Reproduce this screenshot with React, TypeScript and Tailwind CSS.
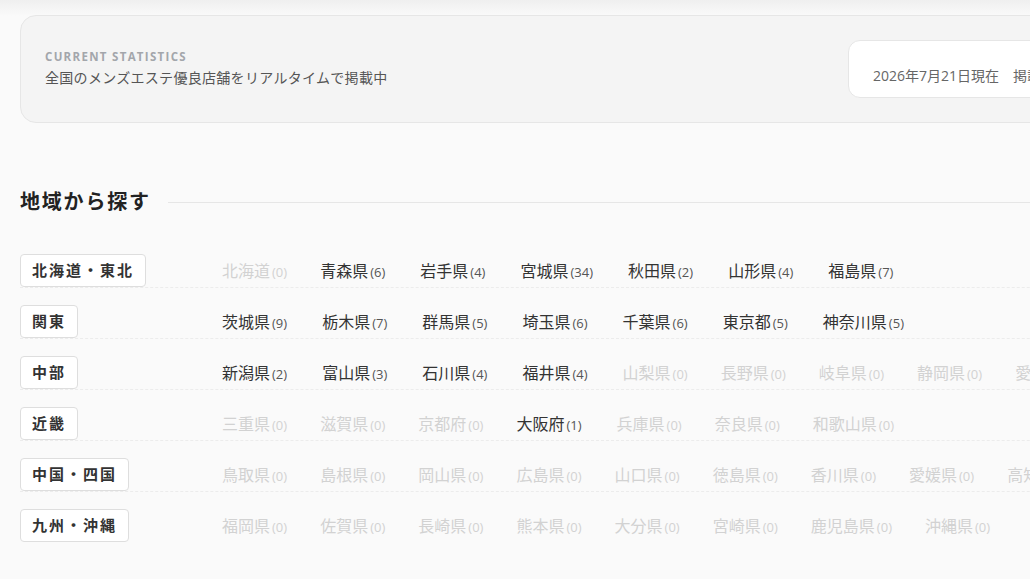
import React from "react";

type Pref = [string, number];
const regions: { name: string; prefs: Pref[] }[] = [
  { name: "北海道・東北", prefs: [["北海道", 0], ["青森県", 6], ["岩手県", 4], ["宮城県", 34], ["秋田県", 2], ["山形県", 4], ["福島県", 7]] },
  { name: "関東", prefs: [["茨城県", 9], ["栃木県", 7], ["群馬県", 5], ["埼玉県", 6], ["千葉県", 6], ["東京都", 5], ["神奈川県", 5]] },
  { name: "中部", prefs: [["新潟県", 2], ["富山県", 3], ["石川県", 4], ["福井県", 4], ["山梨県", 0], ["長野県", 0], ["岐阜県", 0], ["静岡県", 0], ["愛知県", 0]] },
  { name: "近畿", prefs: [["三重県", 0], ["滋賀県", 0], ["京都府", 0], ["大阪府", 1], ["兵庫県", 0], ["奈良県", 0], ["和歌山県", 0]] },
  { name: "中国・四国", prefs: [["鳥取県", 0], ["島根県", 0], ["岡山県", 0], ["広島県", 0], ["山口県", 0], ["徳島県", 0], ["香川県", 0], ["愛媛県", 0], ["高知県", 0]] },
  { name: "九州・沖縄", prefs: [["福岡県", 0], ["佐賀県", 0], ["長崎県", 0], ["熊本県", 0], ["大分県", 0], ["宮崎県", 0], ["鹿児島県", 0], ["沖縄県", 0]] },
];

export default function App() {
  return (
    <div
      className="w-[1030px] h-[579px] overflow-hidden bg-[#fafafa]"
      style={{ fontFamily: '"Open Sans", "Noto Sans CJK JP", sans-serif' }}
    >
      <div className="w-[1200px] bg-gradient-to-b from-[#efefef] to-[#fafafa] bg-no-repeat [background-size:100%_16px] pt-[15px] px-[20px]">
        {/* stats card */}
        <div className="h-[108px] rounded-[16px] border border-[#e6e6e6] bg-[#f4f4f4] pl-[24px] flex items-center justify-between">
          <div className="flex flex-col">
            <div className="text-[11.5px] font-bold tracking-[1.3px] text-[#a3a6ab] leading-[16px]">CURRENT STATISTICS</div>
            <div className="text-[14px] tracking-[0.3px] text-[#555] leading-[22px] mt-[2px]">全国のメンズエステ優良店舗をリアルタイムで掲載中</div>
          </div>
          <div className="w-[321px] h-[58px] rounded-[12px] border border-[#e6e6e6] bg-white pl-[24px] pt-[13px] flex items-center text-[14px] text-[#666] whitespace-nowrap mr-[10px] overflow-hidden">
            2026年7月21日現在　掲載店舗数 97店舗
          </div>
        </div>

        {/* heading */}
        <div className="mt-[65px] flex items-center gap-[17px]">
          <h2 className="text-[20px] font-bold tracking-[1.8px] leading-[28px] text-[#222]">地域から探す</h2>
          <div className="flex-1 h-px bg-[#e6e6e6]" />
        </div>

        {/* rows */}
        <div className="mt-[21px] flex flex-col">
          {regions.map((r) => (
            <div
              key={r.name}
              className="flex items-center pt-[17px] border-b border-dashed border-[#ececec] last:border-b-0"
            >
              <div className="w-[202px] shrink-0">
                <span className="inline-flex items-center h-[33px] px-[11px] rounded-[4px] border border-[#dedede] bg-white text-[15px] font-bold tracking-[2px] text-[#333]">
                  {r.name}
                </span>
              </div>
              <div className="flex items-baseline gap-x-[33px] whitespace-nowrap">
                {r.prefs.map(([p, n]) =>
                  n > 0 ? (
                    <span key={p} className="text-[#333] pr-[2px]">
                      <span className="text-[16px]">{p}</span>
                      <span className="text-[13px] ml-[2px] text-[#555]">({n})</span>
                    </span>
                  ) : (
                    <span key={p} className="text-[#d2d2d2]">
                      <span className="text-[16px]">{p}</span>
                      <span className="text-[13px] ml-[2px] text-[#d2d2d2]">({n})</span>
                    </span>
                  )
                )}
              </div>
            </div>
          ))}
        </div>
      </div>
    </div>
  );
}
